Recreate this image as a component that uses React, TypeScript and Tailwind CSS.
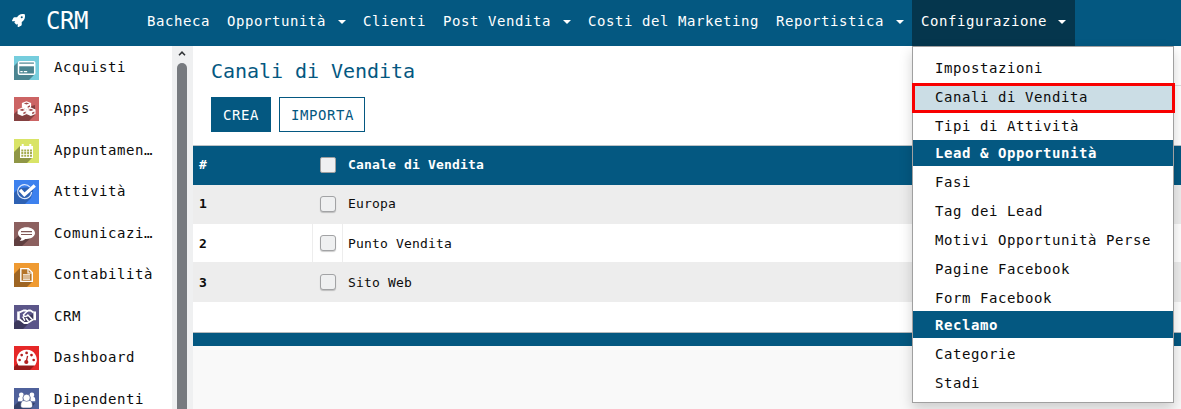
import type { ReactNode } from "react";
import { FaRocket } from "react-icons/fa";

const nav = [
  { label: "Bacheca" },
  { label: "Opportunità", menu: true },
  { label: "Clienti" },
  { label: "Post Vendita", menu: true },
  { label: "Costi del Marketing" },
  { label: "Reportistica", menu: true },
  { label: "Configurazione", menu: true, open: true },
];

function Tile({ bg, shade, shadow, children }: { bg: string; shade: string; shadow: string; children: ReactNode }) {
  return (
    <svg viewBox="0 0 25 24" className="h-6 w-[25px] shrink-0">
      <rect width="25" height="24" fill={bg} />
      <path d={shadow} fill={shade} />
      {children}
    </svg>
  );
}

function Cube({ x, y }: { x: number; y: number }) {
  return (
    <g transform={`translate(${x} ${y})`}>
      <path d="M0-4L4.600-2.100V2.300L0 4.400L-4.600 2.300V-2.100Z" fill="#fff" />
      <path d="M0-2.800L2.700-1.700L0-.6L-2.700-1.700Z" fill="#a04a4a" />
      <path d="M1.200 1L3.500 0V1.600L1.200 2.700Z" fill="#a04a4a" />
    </g>
  );
}

const apps: { label: string; icon: ReactNode }[] = [
  {
    label: "Acquisti",
    icon: (
      <Tile bg="#75cddd" shade="#4b8591" shadow="M5 5L0 10V24H15L21 18V6Z">
        <rect x="4.500" y="5.700" width="16.200" height="12.600" rx="1" fill="#4b8591" stroke="#fff" strokeWidth="1.500" />
        <path d="M4.500 9H20.500" stroke="#fff" strokeWidth="2.600" />
        <path d="M6.300 15.700H8.700M9.800 15.700H13.200" stroke="#fff" strokeWidth="1.200" />
      </Tile>
    ),
  },
  {
    label: "Apps",
    icon: (
      <Tile bg="#cc6464" shade="#854141" shadow="M4 13L0 17V24H15L21 18V8Z">
        <Cube x={12.5} y={8.2} />
        <Cube x={8.2} y={14.6} />
        <Cube x={16.9} y={14.6} />
      </Tile>
    ),
  },
  {
    label: "Appuntamen…",
    icon: (
      <Tile bg="#d9e467" shade="#8f9645" shadow="M6 7L0 13V24H13L19 18V8Z">
        <path d="M6 7h13v12H6z" fill="#fff" />
        <path d="M8.700 5v3M16.300 5v3" stroke="#fff" strokeWidth="2" />
        <path d="M7.300 10.400h2v2h-2zm2.900 0h2v2h-2zm2.900 0h2v2h-2zm2.900 0h2v2h-2zM7.300 13.100h2v2h-2zm2.900 0h2v2h-2zm2.900 0h2v2h-2zm2.900 0h2v2h-2zM7.300 15.800h2v2h-2zm2.900 0h2v2h-2zm2.900 0h2v2h-2zm2.900 0h2v2h-2z" fill="#a5ac50" />
      </Tile>
    ),
  },
  {
    label: "Attività",
    icon: (
      <Tile bg="#3d81ee" shade="#2e61b3" shadow="M5 8L0 13V24H11L17 18L20 7Z">
        <path d="M16 7.200A7 7 0 1 0 17.600 12" fill="none" stroke="#dce8fd" strokeWidth="1.200" />
        <path d="M6 9.800l4.400 4.900L20.800 5.600" fill="none" stroke="#fff" strokeWidth="3.300" />
      </Tile>
    ),
  },
  {
    label: "Comunicazi…",
    icon: (
      <Tile bg="#8c605f" shade="#603f40" shadow="M5 13L0 18V24H8L20 13V8Z">
        <path d="M12.500 5.200c4.800 0 8.500 2.600 8.500 5.900s-3.700 5.900-8.500 5.900h-1.200c-1.300 1.200-3.200 2-5.500 2 .9-.7 1.500-1.700 1.600-2.900C5.400 15 4 13.300 4 11.200 4 7.900 7.700 5.200 12.500 5.200z" fill="#fff" />
        <path d="M7 9.700h11M7 12.500h11" stroke="#805857" strokeWidth="1.200" />
      </Tile>
    ),
  },
  {
    label: "Contabilità",
    icon: (
      <Tile bg="#ef9a31" shade="#9e6523" shadow="M6 5L0 11V24H13L19 18V9Z">
        <path d="M6.800 5.600h7.500l4 4v8.800H6.800z" fill="#b47429" stroke="#fff" strokeWidth="1.400" />
        <path d="M14 5.500V10h4.500" fill="none" stroke="#fff" strokeWidth="1.200" />
        <path d="M9 11.800h7M9 14h7M9 16.200h7" stroke="#fff" strokeWidth="1.200" />
      </Tile>
    ),
  },
  {
    label: "CRM",
    icon: (
      <Tile bg="#5b5689" shade="#3c385d" shadow="M3 15L0 18V24H9L16 17L22 15V8Z">
        <path d="M3.200 6.500h2.600v8.800H3.200zM19.400 6.500H22v8.800h-2.600z" fill="#fff" />
        <path d="M5.500 7.400L9.500 5.500h2.500l1 .8 1.500-.8h2l3 1.900M5.500 14.300l4.800 3.700h3.200l6-3.700" fill="none" stroke="#fff" strokeWidth="1.800" strokeLinejoin="round" />
        <path d="M13 6.300L9.500 9.800c.4 2.400 2.800 2 4.400.2l3.600 3.800M9 12.200l1.600 3M12.400 13.500l1.900 2.500" fill="none" stroke="#fff" strokeWidth="1.500" strokeLinecap="round" />
      </Tile>
    ),
  },
  {
    label: "Dashboard",
    icon: (
      <Tile bg="#e62828" shade="#961a1a" shadow="M4 17L0 21V24H16L21.500 18.500Z">
        <path d="M12.700 3.700a10 10 0 0 1 8.600 15.200q-.4.700-1.200.7H5.300q-.8 0-1.200-.7A10 10 0 0 1 12.700 3.700z" fill="#fff" />
        <g fill="#b31f1f">
          <circle cx="5.600" cy="14" r="1.350" />
          <circle cx="7.700" cy="9.100" r="1.350" />
          <circle cx="12.600" cy="6.900" r="1.350" />
          <circle cx="17.500" cy="9.100" r="1.350" />
          <circle cx="19.700" cy="14" r="1.350" />
          <circle cx="12.300" cy="16" r="2.100" />
        </g>
        <path d="M12.300 15.500L13.600 9.900" stroke="#b31f1f" strokeWidth="1.300" />
      </Tile>
    ),
  },
  {
    label: "Dipendenti",
    icon: (
      <Tile bg="#4f619b" shade="#35426b" shadow="M4 14L0 18V24H15L21 15Z">
        <g fill="#fff">
          <circle cx="7.300" cy="7" r="2.400" />
          <circle cx="17.900" cy="7" r="2.400" />
          <path d="M4 13.200V11q0-2 1.600-2h3.200v4.200zM21.200 13.200V11q0-2-1.600-2h-3.200v4.200z" />
        </g>
        <g fill="#fff" stroke="#3f4e80" strokeWidth=".6">
          <path d="M6.700 17.500c0-3.500 1.300-5 3.300-5h5.200c2 0 3.300 1.500 3.300 5 0 1.700-1 2.500-2.400 2.500H9.100c-1.400 0-2.400-.8-2.400-2.500z" />
          <circle cx="12.600" cy="9.800" r="3.600" />
        </g>
      </Tile>
    ),
  },
];

const menuTop = ["Impostazioni", "Canali di Vendita", "Tipi di Attività"];
const menuLead = ["Fasi", "Tag dei Lead", "Motivi Opportunità Perse", "Pagine Facebook", "Form Facebook"];
const menuClaim = ["Categorie", "Stadi"];

function MenuItem({ label, grouped }: { label: string; grouped?: boolean }) {
  const current = label === "Canali di Vendita";
  return (
    <li className={grouped ? "flex h-[29px] items-center pt-[3px] pl-[22px]" : "relative isolate flex h-[29px] items-center pt-px pl-[22px]"}>
      {label}
      {current && <span className="absolute top-px -right-[2px] -left-px -z-10 h-[30px] border-[3px] border-[#f80000] bg-[#cbdde5]" />}
    </li>
  );
}

const heading = "flex items-center bg-[#045881] pl-[22px] font-bold text-white";

function Check({ header }: { header?: boolean }) {
  return (
    <span
      className={
        header
          ? "block size-4 rounded-[2px] border border-[#a0a0a0] bg-[#eff0f1]"
          : "block size-4 rounded-[3px] border border-[#a2a3a5] bg-[#eff0f1] shadow-[0_1px_1px_rgba(0,0,0,0.2)]"
      }
    />
  );
}

const rows = [
  { n: 1, name: "Europa", row: "flex h-[39px] bg-[#ededed]", check: "pb-[2px]", text: "pb-[2px]" },
  { n: 2, name: "Punto Vendita", row: "flex h-[38px] bg-white", check: "", text: "pt-[2px]" },
  { n: 3, name: "Sito Web", row: "flex h-[40px] bg-[#ededed]", check: "", text: "pt-[2px]" },
];

export default function App() {
  return (
    <div className="flex h-[409px] w-[1181px] flex-col overflow-hidden bg-[#f9f9f9] font-['DejaVu_Sans_Mono',monospace] text-[14px] leading-[18px] tracking-[0.572px] text-[#0c0c0c]">
      <header className="flex h-[46px] shrink-0 bg-[#045881] text-white">
        <div className="flex w-[138px] shrink-0 items-center pl-3">
          <FaRocket className="mt-[-5px] size-[13px]" />
          <span className="-mt-1 ml-[21px] text-[24px] leading-7 tracking-[-0.450px]">CRM</span>
        </div>
        <nav className="flex">
          {nav.map((item) => (
            <div key={item.label} className={item.open ? "relative flex bg-[#05364d] pr-[9px] pl-[9px]" : "flex pr-2 pl-[9px]"}>
              <span className="mt-3 whitespace-pre">{item.label}</span>
              {item.menu && (
                <span className={item.open ? "mt-5 ml-[11px] size-0 border-x-4 border-t-4 border-x-transparent border-t-white" : "mt-5 ml-3 size-0 border-x-4 border-t-4 border-x-transparent border-t-white"} />
              )}
              {item.open && (
                <ul className="absolute top-[46px] left-0 z-10 h-[357px] w-[262px] border border-[#a0a0a0] bg-white pt-[6px] text-[#0c0c0c] shadow-[0_6px_12px_rgba(0,0,0,0.175)]">
                  {menuTop.map((m) => <MenuItem key={m} label={m} />)}
                  <li className={heading + " h-[26px]"}>Lead &amp; Opportunità</li>
                  {menuLead.map((m) => <MenuItem key={m} label={m} grouped />)}
                  <li className={heading + " h-[27px] pt-px"}>Reclamo</li>
                  {menuClaim.map((m) => <MenuItem key={m} label={m} grouped />)}
                </ul>
              )}
            </div>
          ))}
        </nav>
      </header>
      <div className="flex min-h-0 flex-1">
        <aside className="flex w-[172px] shrink-0 flex-col overflow-hidden bg-white pt-[9.900px]">
          {apps.map((a) => (
            <div key={a.label} className="flex h-[41.500px] shrink-0 items-start pl-3.5">
              {a.icon}
              <span className="mt-[2px] ml-[15px]">{a.label}</span>
            </div>
          ))}
        </aside>
        <div className="flex w-[21px] shrink-0 flex-col items-center bg-[#eff0f1]">
          <svg viewBox="0 0 8 5" className="mt-[5px] mr-[2px] h-[5px] w-2 shrink-0">
            <path d="M1 4.300L4 1.200L7 4.300" fill="none" stroke="#303336" strokeWidth="1.500" />
          </svg>
          <div className="mt-[7px] mr-px h-[360px] w-[10px] shrink-0 rounded-t-full bg-[#777a7f]" />
        </div>
        <main className="flex min-w-0 flex-1 flex-col">
          <div className="flex h-[99px] shrink-0 justify-between bg-white pl-[18px]">
            <div>
              <h1 className="mt-[13px] text-[20px] leading-6 tracking-[-0.040px] text-[#045881]">Canali di Vendita</h1>
              <div className="mt-[14px] flex gap-2">
                <button className="h-[35px] w-[60px] bg-[#045881] pt-px text-white">CREA</button>
                <button className="h-[35px] w-[86px] border border-[#045881] pt-px pl-px text-[#045881]">IMPORTA</button>
              </div>
            </div>
            <div className="h-10 w-40 border-b border-[#dedede]" />
          </div>
          <div className="flex shrink-0 flex-col border-t border-[#bdc3c7] text-[13px] leading-4 tracking-[0.174px]">
            <div className="flex h-[39px] items-center bg-[#045881] pb-[2px] font-bold text-white">
              <span className="w-[127px] pl-[6px]">#</span>
              <Check header />
              <span className="pl-[12px]">Canale di Vendita</span>
            </div>
            {rows.map((r) => (
              <div key={r.n} className={r.row}>
                <span className={"flex w-[119px] items-center pl-[6px] font-bold " + r.text}>{r.n}</span>
                <span className={"flex w-[31px] items-center justify-center border-x border-[#ededed] " + r.check}>
                  <Check />
                </span>
                <span className={"flex items-center pl-[5px] " + r.text}>{r.name}</span>
              </div>
            ))}
            <div className="h-[30px] bg-white" />
            <div className="h-[14px] border-t border-[#b5babd] bg-[#045881]" />
          </div>
        </main>
      </div>
    </div>
  );
}
